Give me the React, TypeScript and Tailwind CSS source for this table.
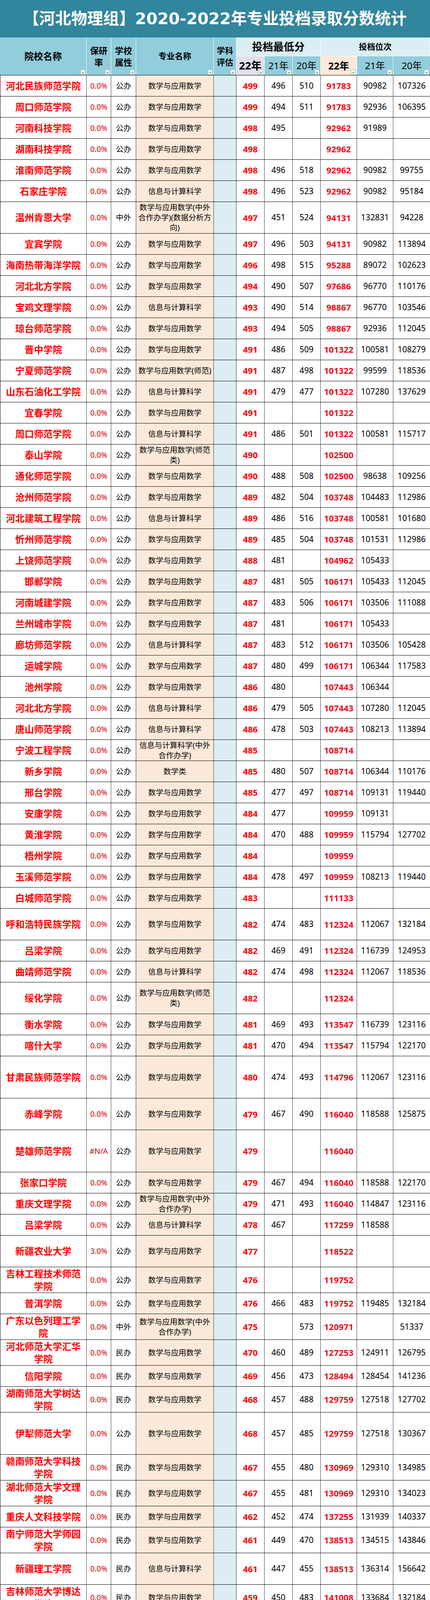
import React from 'react'

// column widths measured off the sheet, sum = 1102
const COLS = 'grid grid-cols-[222px_63px_64px_199px_58px_72px_72px_72px_93px_93px_94px]'

const MAJOR: Record<string, string> = {
  A: '数学与应用数学',
  X: '信息与计算科学',
}

const HEIGHT: Record<string, string> = {
  '54': 'h-[54px]',
  '66': 'h-[66px]',
  '81': 'h-[81px]',
  '108': 'h-[108px]',
}

// height|school|rate|type|major|22|21|20|rank22|rank21|rank20   ("^" = line break)
const RAW = `
54|河北民族师范学院|0.0%|公办|A|499|496|510|91783|90982|107326
54|周口师范学院|0.0%|公办|A|499|494|511|91783|92936|106395
54|河南科技学院|0.0%|公办|A|498|495||92962|91989|
54|湖南科技学院|0.0%|公办|A|498|||92962||
54|淮南师范学院|0.0%|公办|A|498|496|518|92962|90982|99755
54|石家庄学院|0.0%|公办|X|498|496|523|92962|90982|95184
81|温州肯恩大学|0.0%|中外|数学与应用数学(中外^合作办学)(数据分析方^向)|497|451|524|94131|132831|94228
54|宜宾学院|0.0%|公办|A|497|496|503|94131|90982|113894
54|海南热带海洋学院|0.0%|公办|A|496|498|515|95288|89072|102623
54|河北北方学院|0.0%|公办|A|494|490|507|97686|96770|110176
54|宝鸡文理学院|0.0%|公办|X|493|490|514|98867|96770|103546
54|琼台师范学院|0.0%|公办|A|493|494|505|98867|92936|112045
54|晋中学院|0.0%|公办|A|491|486|509|101322|100581|108279
54|宁夏师范学院|0.0%|公办|数学与应用数学(师范)|491|487|498|101322|99599|118536
54|山东石油化工学院|0.0%|公办|X|491|479|477|101322|107280|137629
54|宜春学院|0.0%|公办|A|491|||101322||
54|周口师范学院|0.0%|公办|X|491|486|501|101322|100581|115717
54|泰山学院|0.0%|公办|数学与应用数学(师范^类)|490|||102500||
54|通化师范学院|0.0%|公办|A|490|488|508|102500|98638|109256
54|沧州师范学院|0.0%|公办|A|489|482|504|103748|104483|112986
54|河北建筑工程学院|0.0%|公办|X|489|486|516|103748|100581|101680
54|忻州师范学院|0.0%|公办|A|489|485|504|103748|101531|112986
54|上饶师范学院|0.0%|公办|A|488|481||104962|105433|
54|邯郸学院|0.0%|公办|A|487|481|505|106171|105433|112045
54|河南城建学院|0.0%|公办|A|487|483|506|106171|103506|111088
54|兰州城市学院|0.0%|公办|A|487|481||106171|105433|
54|廊坊师范学院|0.0%|公办|X|487|483|512|106171|103506|105428
54|运城学院|0.0%|公办|A|487|480|499|106171|106344|117583
54|池州学院|0.0%|公办|A|486|480||107443|106344|
54|河北北方学院|0.0%|公办|X|486|479|505|107443|107280|112045
54|唐山师范学院|0.0%|公办|X|486|478|503|107443|108213|113894
54|宁波工程学院|0.0%|公办|信息与计算科学(中外^合作办学)|485|||108714||
54|新乡学院|0.0%|公办|数学类|485|480|507|108714|106344|110176
54|邢台学院|0.0%|公办|A|485|477|497|108714|109131|119440
54|安康学院|0.0%|公办|A|484|477||109959|109131|
54|黄淮学院|0.0%|公办|A|484|470|488|109959|115794|127702
54|梧州学院|0.0%|公办|A|484|||109959||
54|玉溪师范学院|0.0%|公办|A|484|478|497|109959|108213|119440
54|白城师范学院|0.0%|公办|A|483|||111133||
81|呼和浩特民族学院|0.0%|公办|A|482|474|483|112324|112067|132184
54|吕梁学院|0.0%|公办|A|482|469|491|112324|116739|124953
54|曲靖师范学院|0.0%|公办|X|482|474|498|112324|112067|118536
81|绥化学院|0.0%|公办|数学与应用数学(师范^类)|482|||112324||
54|衡水学院|0.0%|公办|A|481|469|493|113547|116739|123116
54|喀什大学|0.0%|公办|A|481|470|494|113547|115794|122170
108|甘肃民族师范学院|0.0%|公办|A|480|474|493|114796|112067|123116
81|赤峰学院|0.0%|公办|A|479|467|490|116040|118588|125875
108|楚雄师范学院|#N/A|公办|A|479|||116040||
54|张家口学院|0.0%|公办|A|479|467|494|116040|118588|122170
54|重庆文理学院|0.0%|公办|数学与应用数学(中外^合作办学)|479|471|493|116040|114847|123116
54|吕梁学院|0.0%|公办|X|478|467||117259|118588|
81|新疆农业大学|3.0%|公办|A|477|||118522||
66|吉林工程技术师范^学院|0.0%|公办|A|476|||119752||
54|普洱学院|0.0%|公办|A|476|466|483|119752|119485|132184
66|广东以色列理工学^院|0.0%|中外|数学与应用数学(中外^合作办学)|475||573|120971||51337
66|河北师范大学汇华^学院|0.0%|民办|A|470|460|489|127253|124911|126795
54|信阳学院|0.0%|民办|A|469|456|473|128494|128454|141236
66|湖南师范大学树达^学院|0.0%|民办|A|468|457|488|129759|127518|127702
108|伊犁师范大学|0.0%|公办|A|468|457|485|129759|127518|130367
66|赣南师范大学科技^学院|0.0%|民办|A|467|455|480|130969|129310|134985
66|湖北师范大学文理^学院|0.0%|民办|A|467|455|481|130969|129310|134023
54|重庆人文科技学院|0.0%|民办|A|462|452|474|137255|131939|140337
66|南宁师范大学师园^学院|0.0%|民办|A|461|449|470|138513|134515|143846
81|新疆理工学院|0.0%|民办|X|461|447|455|138513|136314|156642
66|吉林师范大学博达^学院|0.0%|民办|A|459|450|483|141008|133684|132184
81|内蒙古大学创业学^院|0.0%|民办|X|459|447|471|141008|136314|142967
66|南昌应用技术师范^学院|0.0%|民办|A|458|443|473|142250|139702|141236
66|延安大学西安创新^学院|0.0%|民办|A|458|437|443|142250|144729|166547
54|福州大学至诚学院|0.0%|民办|X|457|||143500||
54|昆明文理学院|0.0%|民办|A|454|443|452|147340|139702|159102
54|荆州学院|0.0%|民办|A|453|||148600||
54|厦门工学院|0.0%|民办|X|451|436|467|151103|145515|146417
54|河北外国语学院|0.0%|民办|X|445|428||158356|152021|
54|衡水学院|0.0%|公办|数学与应用数学(中外^合作办学)|445|||158356||
`

const rows = RAW.trim()
  .split('\n')
  .map((line) => {
    const [h, name, rate, kind, major, s22, s21, s20, r22, r21, r20] = line.split('|')
    return {
      h,
      name: name.replace(/\^/g, '\n'),
      rate,
      kind,
      major: (MAJOR[major] ?? major).replace(/\^/g, '\n'),
      s22,
      s21,
      s20,
      r22,
      r21,
      r20,
    }
  })

// little Excel autofilter button in the header corner
function FilterButton() {
  return (
    <svg className="absolute right-[2px] bottom-[1px]" width="13" height="13" viewBox="0 0 13 13">
      <rect x="0.5" y="0.5" width="12" height="12" fill="#f6f6f6" stroke="#a8a8a8" />
      <path d="M3.5 6.5h6l-3 3.5z" fill="#2f9e44" />
    </svg>
  )
}

function Head({ children, className = '', filter = true }: { children: React.ReactNode; className?: string; filter?: boolean }) {
  return (
    <div className={`relative flex items-center justify-center text-center border-r border-white text-black whitespace-pre leading-[1.3] ${className}`}>
      {children}
      {filter && <FilterButton />}
    </div>
  )
}

function Cell({ children, className = '' }: { children?: React.ReactNode; className?: string }) {
  return (
    <div className={`flex items-center justify-center text-center border-r border-[#3a3a3a] whitespace-pre leading-[1.3] overflow-hidden ${className}`}>
      {children}
    </div>
  )
}

export default function App() {
  return (
    <div className="w-[1102px] overflow-hidden bg-white font-['Noto_Sans','Noto_Sans_CJK_SC',sans-serif]">
      {/* title band */}
      <div className="h-[96px] bg-[#31859c] flex items-center justify-center">
        <h1 className="text-white font-bold text-[41px] leading-none font-['DejaVu_Sans','Noto_Sans_CJK_SC',sans-serif]">
          【河北物理组】2020-2022年专业投档录取分数统计
        </h1>
      </div>

      {/* header */}
      <div className={`${COLS} grid-rows-[48px_48px] h-[97px] bg-[#92cddc] border-b border-black`}>
        <Head className="row-span-2 font-bold text-[24px]">院校名称</Head>
        <Head className="row-span-2 font-bold text-[22px] leading-[30px]">{'保研\n率'}</Head>
        <Head className="row-span-2 font-bold text-[22px] leading-[30px]">{'学校\n属性'}</Head>
        <Head className="row-span-2 font-bold text-[21px]">专业名称</Head>
        <Head className="row-span-2 font-bold text-[21px] leading-[30px]">{'学科\n评估'}</Head>
        <Head filter={false} className="col-span-3 bg-[#daeef3] border-b font-bold text-[27px]">
          投档最低分
        </Head>
        <Head filter={false} className="col-span-3 bg-[#daeef3] border-b font-bold text-[21px]">
          投档位次
        </Head>
        <Head className="bg-[#e4dfec] font-bold text-[27px]">22年</Head>
        <Head className="text-[24px]">21年</Head>
        <Head className="text-[24px]">20年</Head>
        <Head className="bg-[#fde9d9] font-bold text-[25px]">22年</Head>
        <Head className="text-[24px]">21年</Head>
        <Head className="text-[24px] border-r-0">20年</Head>
      </div>

      {/* data rows */}
      {rows.map((r, i) => (
        <div key={i} className={`${COLS} ${HEIGHT[r.h]} border-b border-black text-black`}>
          <Cell className="border-l border-l-black text-[24px] font-bold text-[#ff0000] leading-[32px]">{r.name}</Cell>
          <Cell className="text-[19.5px] text-[#d00000]">{r.rate}</Cell>
          <Cell className="text-[19.5px]">{r.kind}</Cell>
          <Cell className="bg-[#fde9d9] text-[19.5px] leading-[26px]">{r.major}</Cell>
          <Cell className="bg-[#daeef3]" />
          <Cell className="text-[22px] font-bold text-[#ff0000]">{r.s22}</Cell>
          <Cell className="text-[21px]">{r.s21}</Cell>
          <Cell className="text-[21px]">{r.s20}</Cell>
          <Cell className="text-[22px] font-bold text-[#f00c1c]">{r.r22}</Cell>
          <Cell className="text-[21px]">{r.r21}</Cell>
          <Cell className="text-[21px] border-r-0">{r.r20}</Cell>
        </div>
      ))}
    </div>
  )
}
